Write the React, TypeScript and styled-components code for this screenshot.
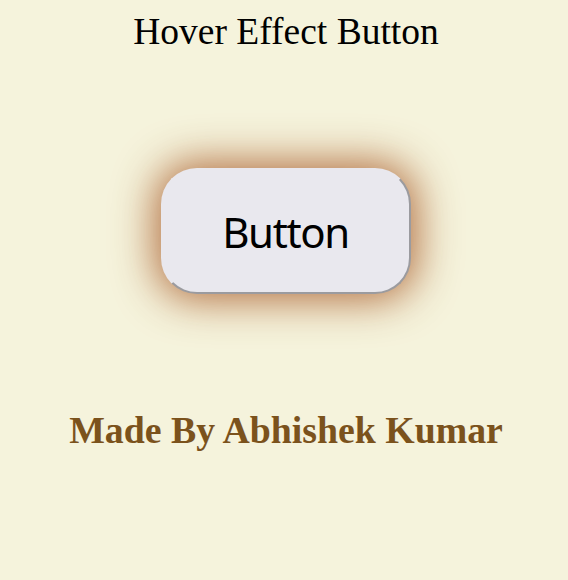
import React from "react";
import styled, { createGlobalStyle } from "styled-components";

const Global = createGlobalStyle`
  html, body { margin: 0; padding: 0; }
  body {
    background: #f5f3dc;
    font-family: "Liberation Serif", "Times New Roman", serif;
  }
`;

const Page = styled.main`
  display: flex;
  flex-direction: column;
  align-items: center;
  padding-top: 10px;
  min-height: 580px;
  box-sizing: border-box;
`;

const Title = styled.h1`
  margin: 0;
  font-size: 37.5px;
  font-weight: 400;
  line-height: 43px;
  color: #000;
  padding-left: 4px;
`;

const Stage = styled.div`
  display: flex;
  justify-content: center;
  margin-top: 115px;
  padding-left: 3px;
`;

const FancyButton = styled.button`
  width: 250px;
  height: 126px;
  box-sizing: border-box;
  border-radius: 36px;
  background: #e9e8ee;
  border: 2px solid;
  border-color: #e9e8ee #9b9b9f #9b9b9f #e9e8ee;
  box-shadow: 0 0 40px 6px rgba(170, 95, 45, 0.88);
  font-family: "Noto Sans", "DejaVu Sans", sans-serif;
  font-size: 42px;
  letter-spacing: -1.4px;
  color: #000;
  padding: 0;
  cursor: pointer;
`;

const Credit = styled.h2`
  margin: 115px 0 0 0;
  font-size: 37.8px;
  font-weight: 700;
  line-height: 43px;
  color: #7b521c;
  padding-left: 4px;
`;

export default function App() {
  return (
    <>
      <Global />
      <Page>
        <Title>Hover Effect Button</Title>
        <Stage>
          <FancyButton>Button</FancyButton>
        </Stage>
        <Credit>Made By Abhishek Kumar</Credit>
      </Page>
    </>
  );
}
